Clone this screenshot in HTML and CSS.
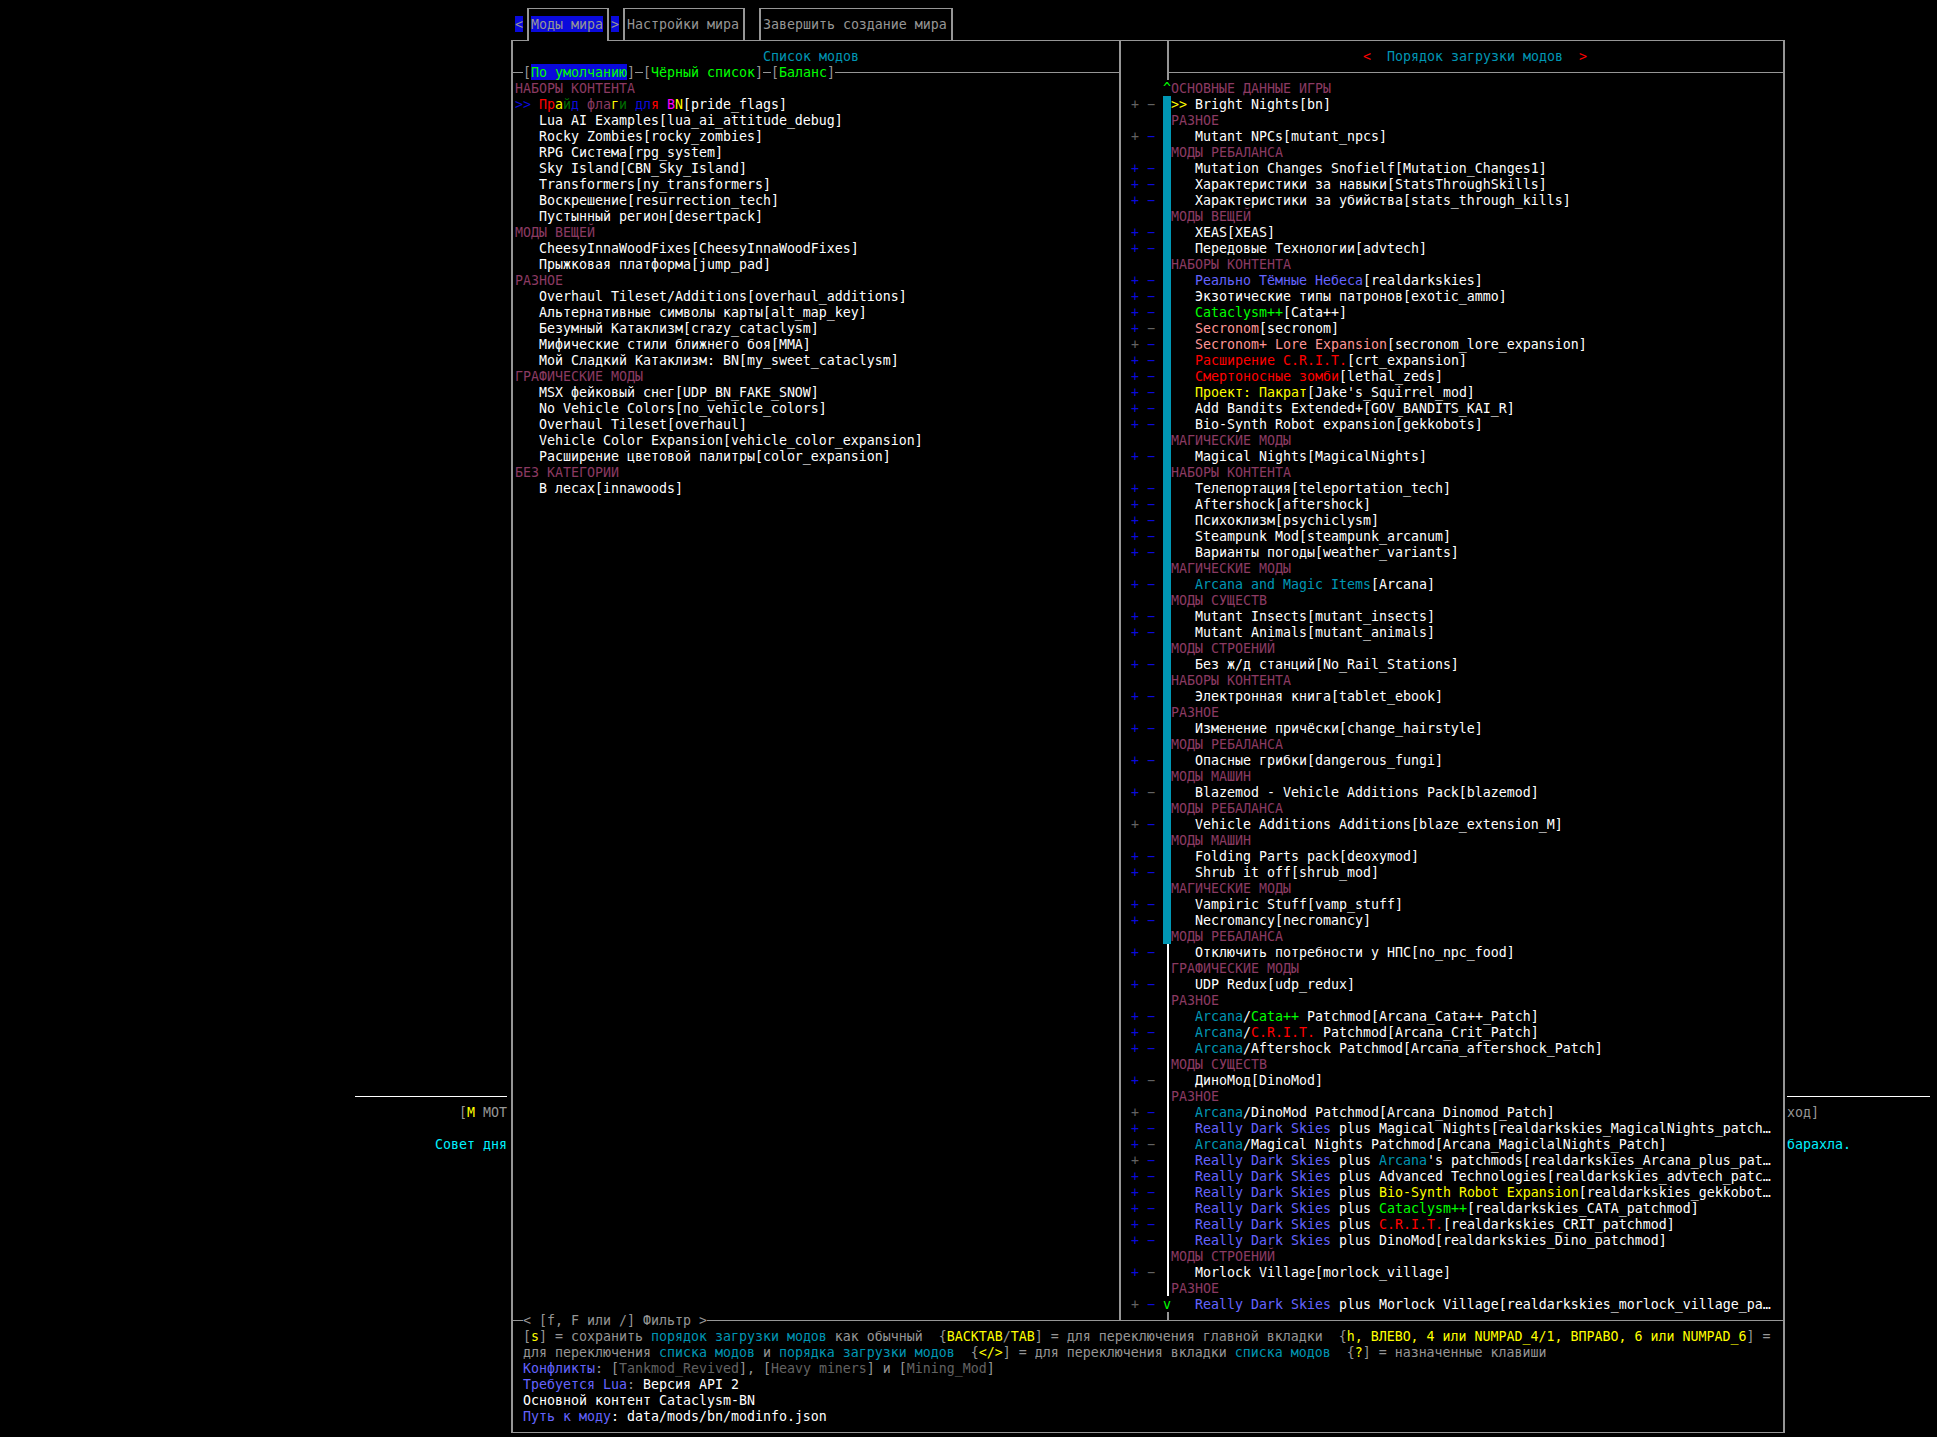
FILE: index.html
```html
<!DOCTYPE html>
<html lang="ru">
<head>
    <meta charset="UTF-8">
    <title>Моды мира</title>
    <link rel="stylesheet" href="styles.css">
</head>
<body>
<div class="screen">
    <div class="side side--left">
        <div class="side__rule"></div>
        <div class="row">[<span class="yellow">M</span> МОТ</div>
        <div class="row"></div>
        <div class="row lcyan">Совет дня</div>
    </div>

    <div class="window">
        <div class="tabs">
            <span class="tabs__arrow">&lt;</span>
            <div class="tab tab--active"><span class="hilite">Моды мира</span></div>
            <span class="tabs__arrow tabs__arrow--right">&gt;</span>
            <div class="tab">Настройки мира</div>
            <div class="tab tab--last">Завершить создание мира</div>
        </div>

        <div class="frame">
            <div class="panes">
                <section class="mods">
                    <div class="title title--mods cyan">Список модов</div>
                    <div class="rule-row">
                        <span class="dash dash--start"></span>
                        <span>[<span class="hilite lgreen">По умолчанию</span>]</span>
                        <span class="dash dash--gap"></span>
                        <span>[<span class="lgreen">Чёрный список</span>]</span>
                        <span class="dash dash--gap"></span>
                        <span>[<span class="lgreen">Баланс</span>]</span>
                        <span class="dash"></span>
                    </div>
                    <div class="list">
                        <div class="row cat">НАБОРЫ КОНТЕНТА</div>
                        <div class="row"><span class="blue">&gt;&gt; </span><span class="red">Пр</span><span class="yellow">а</span><span class="green">й</span><span class="blue">д</span> <span class="pink">фла</span><span class="yellow">г</span><span class="green">и</span> <span class="blue">дл</span><span class="red">я</span> <span class="magenta">B</span><span class="yellow">N</span>[pride_flags]</div>
                        <div class="row mod">Lua AI Examples[lua_ai_attitude_debug]</div>
                        <div class="row mod">Rocky Zombies[rocky_zombies]</div>
                        <div class="row mod">RPG Система[rpg_system]</div>
                        <div class="row mod">Sky Island[CBN_Sky_Island]</div>
                        <div class="row mod">Transformers[ny_transformers]</div>
                        <div class="row mod">Воскрешение[resurrection_tech]</div>
                        <div class="row mod">Пустынный регион[desertpack]</div>
                        <div class="row cat">МОДЫ ВЕЩЕЙ</div>
                        <div class="row mod">CheesyInnaWoodFixes[CheesyInnaWoodFixes]</div>
                        <div class="row mod">Прыжковая платформа[jump_pad]</div>
                        <div class="row cat">РАЗНОЕ</div>
                        <div class="row mod">Overhaul Tileset/Additions[overhaul_additions]</div>
                        <div class="row mod">Альтернативные символы карты[alt_map_key]</div>
                        <div class="row mod">Безумный Катаклизм[crazy_cataclysm]</div>
                        <div class="row mod">Мифические стили ближнего боя[MMA]</div>
                        <div class="row mod">Мой Сладкий Катаклизм: BN[my_sweet_cataclysm]</div>
                        <div class="row cat">ГРАФИЧЕСКИЕ МОДЫ</div>
                        <div class="row mod">MSX фейковый снег[UDP_BN_FAKE_SNOW]</div>
                        <div class="row mod">No Vehicle Colors[no_vehicle_colors]</div>
                        <div class="row mod">Overhaul Tileset[overhaul]</div>
                        <div class="row mod">Vehicle Color Expansion[vehicle_color_expansion]</div>
                        <div class="row mod">Расширение цветовой палитры[color_expansion]</div>
                        <div class="row cat">БЕЗ КАТЕГОРИИ</div>
                        <div class="row mod">В лесах[innawoods]</div>
                    </div>
                </section>

                <div class="flags">
                    <div class="row"></div>
                    <div class="row"><span class="off">+</span> <span class="off">−</span></div>
                    <div class="row"></div>
                    <div class="row"><span class="off">+</span> −</div>
                    <div class="row"></div>
                    <div class="row">+ −</div>
                    <div class="row">+ −</div>
                    <div class="row">+ −</div>
                    <div class="row"></div>
                    <div class="row">+ −</div>
                    <div class="row">+ −</div>
                    <div class="row"></div>
                    <div class="row">+ −</div>
                    <div class="row">+ −</div>
                    <div class="row">+ −</div>
                    <div class="row">+ <span class="off">−</span></div>
                    <div class="row"><span class="off">+</span> −</div>
                    <div class="row">+ −</div>
                    <div class="row">+ −</div>
                    <div class="row">+ −</div>
                    <div class="row">+ −</div>
                    <div class="row">+ −</div>
                    <div class="row"></div>
                    <div class="row">+ −</div>
                    <div class="row"></div>
                    <div class="row">+ −</div>
                    <div class="row">+ −</div>
                    <div class="row">+ −</div>
                    <div class="row">+ −</div>
                    <div class="row">+ −</div>
                    <div class="row"></div>
                    <div class="row">+ −</div>
                    <div class="row"></div>
                    <div class="row">+ −</div>
                    <div class="row">+ −</div>
                    <div class="row"></div>
                    <div class="row">+ −</div>
                    <div class="row"></div>
                    <div class="row">+ −</div>
                    <div class="row"></div>
                    <div class="row">+ −</div>
                    <div class="row"></div>
                    <div class="row">+ −</div>
                    <div class="row"></div>
                    <div class="row">+ <span class="off">−</span></div>
                    <div class="row"></div>
                    <div class="row"><span class="off">+</span> −</div>
                    <div class="row"></div>
                    <div class="row">+ −</div>
                    <div class="row">+ −</div>
                    <div class="row"></div>
                    <div class="row">+ −</div>
                    <div class="row">+ −</div>
                    <div class="row"></div>
                    <div class="row">+ −</div>
                    <div class="row"></div>
                    <div class="row">+ −</div>
                    <div class="row"></div>
                    <div class="row">+ −</div>
                    <div class="row">+ −</div>
                    <div class="row">+ −</div>
                    <div class="row"></div>
                    <div class="row">+ <span class="off">−</span></div>
                    <div class="row"></div>
                    <div class="row"><span class="off">+</span> −</div>
                    <div class="row">+ −</div>
                    <div class="row">+ <span class="off">−</span></div>
                    <div class="row"><span class="off">+</span> −</div>
                    <div class="row">+ −</div>
                    <div class="row">+ −</div>
                    <div class="row">+ −</div>
                    <div class="row">+ −</div>
                    <div class="row">+ −</div>
                    <div class="row"></div>
                    <div class="row">+ <span class="off">−</span></div>
                    <div class="row"></div>
                    <div class="row"><span class="off">+</span> −</div>
                </div>

                <div class="scroll">
                    <div class="scroll__stub scroll__stub--top"></div>
                    <div class="row lgreen">^</div>
                    <div class="scroll__thumb"></div>
                    <div class="scroll__track"></div>
                    <div class="row lgreen">v</div>
                    <div class="scroll__stub"></div>
                </div>

                <section class="order">
                    <div class="title title--order"><span class="red">&lt;</span>  <span class="cyan">Порядок загрузки модов</span>  <span class="red">&gt;</span></div>
                    <div class="rule-row rule-row--order"><span class="dash"></span></div>
                    <div class="list">
                        <div class="row cat">ОСНОВНЫЕ ДАННЫЕ ИГРЫ</div>
                        <div class="row"><span class="yellow">&gt;&gt; </span>Bright Nights[bn]</div>
                        <div class="row cat">РАЗНОЕ</div>
                        <div class="row mod">Mutant NPCs[mutant_npcs]</div>
                        <div class="row cat">МОДЫ РЕБАЛАНСА</div>
                        <div class="row mod">Mutation Changes Snofielf[Mutation_Changes1]</div>
                        <div class="row mod">Характеристики за навыки[StatsThroughSkills]</div>
                        <div class="row mod">Характеристики за убийства[stats_through_kills]</div>
                        <div class="row cat">МОДЫ ВЕЩЕЙ</div>
                        <div class="row mod">XEAS[XEAS]</div>
                        <div class="row mod">Передовые Технологии[advtech]</div>
                        <div class="row cat">НАБОРЫ КОНТЕНТА</div>
                        <div class="row mod"><span class="lblue">Реально Тёмные Небеса</span>[realdarkskies]</div>
                        <div class="row mod">Экзотические типы патронов[exotic_ammo]</div>
                        <div class="row mod"><span class="lgreen">Cataclysm++</span>[Cata++]</div>
                        <div class="row mod"><span class="lred">Secronom</span>[secronom]</div>
                        <div class="row mod"><span class="lred">Secronom+ Lore Expansion</span>[secronom_lore_expansion]</div>
                        <div class="row mod"><span class="red">Расширение C.R.I.T.</span>[crt_expansion]</div>
                        <div class="row mod"><span class="red">Смертоносные зомби</span>[lethal_zeds]</div>
                        <div class="row mod"><span class="yellow">Проект: Пакрат</span>[Jake's_Squirrel_mod]</div>
                        <div class="row mod">Add Bandits Extended+[GOV_BANDITS_KAI_R]</div>
                        <div class="row mod">Bio-Synth Robot expansion[gekkobots]</div>
                        <div class="row cat">МАГИЧЕСКИЕ МОДЫ</div>
                        <div class="row mod">Magical Nights[MagicalNights]</div>
                        <div class="row cat">НАБОРЫ КОНТЕНТА</div>
                        <div class="row mod">Телепортация[teleportation_tech]</div>
                        <div class="row mod">Aftershock[aftershock]</div>
                        <div class="row mod">Психоклизм[psychiclysm]</div>
                        <div class="row mod">Steampunk Mod[steampunk_arcanum]</div>
                        <div class="row mod">Варианты погоды[weather_variants]</div>
                        <div class="row cat">МАГИЧЕСКИЕ МОДЫ</div>
                        <div class="row mod"><span class="cyan">Arcana and Magic Items</span>[Arcana]</div>
                        <div class="row cat">МОДЫ СУЩЕСТВ</div>
                        <div class="row mod">Mutant Insects[mutant_insects]</div>
                        <div class="row mod">Mutant Animals[mutant_animals]</div>
                        <div class="row cat">МОДЫ СТРОЕНИЙ</div>
                        <div class="row mod">Без ж/д станций[No_Rail_Stations]</div>
                        <div class="row cat">НАБОРЫ КОНТЕНТА</div>
                        <div class="row mod">Электронная книга[tablet_ebook]</div>
                        <div class="row cat">РАЗНОЕ</div>
                        <div class="row mod">Изменение причёски[change_hairstyle]</div>
                        <div class="row cat">МОДЫ РЕБАЛАНСА</div>
                        <div class="row mod">Опасные грибки[dangerous_fungi]</div>
                        <div class="row cat">МОДЫ МАШИН</div>
                        <div class="row mod">Blazemod - Vehicle Additions Pack[blazemod]</div>
                        <div class="row cat">МОДЫ РЕБАЛАНСА</div>
                        <div class="row mod">Vehicle Additions Additions[blaze_extension_M]</div>
                        <div class="row cat">МОДЫ МАШИН</div>
                        <div class="row mod">Folding Parts pack[deoxymod]</div>
                        <div class="row mod">Shrub it off[shrub_mod]</div>
                        <div class="row cat">МАГИЧЕСКИЕ МОДЫ</div>
                        <div class="row mod">Vampiric Stuff[vamp_stuff]</div>
                        <div class="row mod">Necromancy[necromancy]</div>
                        <div class="row cat">МОДЫ РЕБАЛАНСА</div>
                        <div class="row mod">Отключить потребности у НПС[no_npc_food]</div>
                        <div class="row cat">ГРАФИЧЕСКИЕ МОДЫ</div>
                        <div class="row mod">UDP Redux[udp_redux]</div>
                        <div class="row cat">РАЗНОЕ</div>
                        <div class="row mod"><span class="cyan">Arcana</span>/<span class="lgreen">Cata++</span> Patchmod[Arcana_Cata++_Patch]</div>
                        <div class="row mod"><span class="cyan">Arcana</span>/<span class="red">C.R.I.T.</span> Patchmod[Arcana_Crit_Patch]</div>
                        <div class="row mod"><span class="cyan">Arcana</span>/Aftershock Patchmod[Arcana_aftershock_Patch]</div>
                        <div class="row cat">МОДЫ СУЩЕСТВ</div>
                        <div class="row mod">ДиноМод[DinoMod]</div>
                        <div class="row cat">РАЗНОЕ</div>
                        <div class="row mod"><span class="cyan">Arcana</span>/DinoMod Patchmod[Arcana_Dinomod_Patch]</div>
                        <div class="row mod"><span class="lblue">Really Dark Skies</span> plus Magical Nights[realdarkskies_MagicalNights_patch…</div>
                        <div class="row mod"><span class="cyan">Arcana</span>/Magical Nights Patchmod[Arcana_MagiclalNights_Patch]</div>
                        <div class="row mod"><span class="lblue">Really Dark Skies</span> plus <span class="cyan">Arcana</span>'s patchmods[realdarkskies_Arcana_plus_pat…</div>
                        <div class="row mod"><span class="lblue">Really Dark Skies</span> plus Advanced Technologies[realdarkskies_advtech_patc…</div>
                        <div class="row mod"><span class="lblue">Really Dark Skies</span> plus <span class="yellow">Bio-Synth Robot Expansion</span>[realdarkskies_gekkobot…</div>
                        <div class="row mod"><span class="lblue">Really Dark Skies</span> plus <span class="lgreen">Cataclysm++</span>[realdarkskies_CATA_patchmod]</div>
                        <div class="row mod"><span class="lblue">Really Dark Skies</span> plus <span class="red">C.R.I.T.</span>[realdarkskies_CRIT_patchmod]</div>
                        <div class="row mod"><span class="lblue">Really Dark Skies</span> plus DinoMod[realdarkskies_Dino_patchmod]</div>
                        <div class="row cat">МОДЫ СТРОЕНИЙ</div>
                        <div class="row mod">Morlock Village[morlock_village]</div>
                        <div class="row cat">РАЗНОЕ</div>
                        <div class="row mod"><span class="lblue">Really Dark Skies</span> plus Morlock Village[realdarkskies_morlock_village_pa…</div>
                    </div>
                </section>
            </div>

            <div class="rule-row rule-row--filter">
                <span class="dash dash--start"></span>
                <span>&lt; [f, F или /] Фильтр &gt;</span>
                <span class="dash"></span>
            </div>

            <div class="info">
                <div class="row gray">[<span class="yellow">s</span>] = сохранить <span class="cyan">порядок загрузки модов</span> как обычный  {<span class="yellow">BACKTAB</span>/<span class="yellow">TAB</span>] = для переключения главной вкладки  {<span class="yellow">h, ВЛЕВО, 4 или NUMPAD_4/1, ВПРАВО, 6 или NUMPAD_6</span>] =</div>
                <div class="row gray">для переключения <span class="cyan">списка модов</span> и <span class="cyan">порядка загрузки модов</span>  {<span class="yellow">&lt;/&gt;</span>] = для переключения вкладки <span class="cyan">списка модов</span>  {<span class="yellow">?</span>] = назначенные клавиши</div>
                <div class="row gray"><span class="lblue">Конфликты</span>: [<span class="dgray">Tankmod_Revived</span>], [<span class="dgray">Heavy miners</span>] и [<span class="dgray">Mining_Mod</span>]</div>
                <div class="row gray"><span class="lblue">Требуется Lua</span>: <span class="white">Версия API 2</span></div>
                <div class="row white">Основной контент Cataclysm-BN</div>
                <div class="row white"><span class="lblue">Путь к моду</span>: data/mods/bn/modinfo.json</div>
            </div>
        </div>
    </div>

    <div class="side side--right">
        <div class="side__rule"></div>
        <div class="row">ход]</div>
        <div class="row"></div>
        <div class="row lcyan">барахла.</div>
    </div>
</div>
</body>
</html>
```

FILE: styles.css
```css
html, body {
    margin: 0;
    height: 100%;
    background: #000;
    overflow: hidden;
}
body {
    padding-left: 3px;
    color: #969696;
    font-family: "DejaVu Sans Mono", "Liberation Mono", monospace;
    font-size: 13.29px;
    line-height: 18px; /* rows stay 16px, this drops the glyphs 1px in the cell */
}
.screen {
    display: flex;
    align-items: flex-start;
}
.row,
.title {
    height: 16px;
    white-space: pre;
}

/* colours */
.white { color: #fff; }
.gray { color: #969696; }
.dgray { color: #636363; }
.cyan { color: #0096b4; }
.lcyan { color: #00f0ff; }
.blue { color: #0a0adc; }
.lblue { color: #6464ff; }
.green { color: #006e00; }
.lgreen { color: #00ff00; }
.red { color: #ff0000; }
.lred { color: #ff9696; }
.yellow { color: #ffff00; }
.magenta { color: #fe00fe; }
.pink { color: #8b3a62; }
.hilite {
    display: inline-block;
    height: 16px;
    background: #0a0adc;
}

/* the screen behind the window */
.side {
    padding-top: 1096px;
}
.side--left {
    width: 504px;
    text-align: right;
}
.side--right {
    width: 143px;
}
.side__rule {
    height: 1px;
    margin-bottom: 7px;
    background: #fff;
}
.side--left .side__rule {
    margin-left: 352px;
}

.window {
    width: 1280px;
    flex: none;
}

.tabs {
    display: flex;
    align-items: flex-start;
    height: 32px;
    padding: 8px 0 0 8px;
}
.tabs__arrow {
    height: 16px;
    margin: 8px 4px 0 0;
    background: #0a0adc;
}
.tabs__arrow--right {
    margin-left: 2px;
}
.tab {
    height: 24px;
    padding: 7px 4px 0 2px;
    border: 2px solid #969696;
    border-width: 1px 2px 0;
}
.tab--active {
    position: relative;
    z-index: 1;
    height: 25px;
    background: #000;
}
.tab--last {
    margin-left: 14px;
}

.frame {
    width: 1270px;
    margin-left: 4px;
    border: 2px solid #969696;
    border-width: 1px 2px;
}
.panes {
    display: flex;
    height: 1279px;
}
.title {
    padding-top: 7px;
}
.title--mods {
    padding-left: 250px;
}
.title--order {
    padding-left: 192px;
}

.rule-row {
    display: flex;
    height: 16px;
}
.rule-row--order {
    margin-left: -2px;
}
.rule-row--filter {
    margin-top: -8px;
}
.dash {
    flex: 1;
    height: 1px;
    margin-top: 8px;
    background: #969696;
}
.dash--start {
    flex: none;
    width: 10px;
}
.dash--gap {
    flex: none;
    width: 8px;
}

.mods {
    width: 606px;
    border-right: 2px solid #969696;
}
.order {
    width: 612px;
}
.list {
    color: #fff;
    padding-left: 2px;
}
.order .list {
    padding-left: 0;
}
.cat {
    color: #8b3a62;
}
.mod {
    padding-left: 24px;
}

.flags {
    width: 32px;
    padding: 39px 0 0 10px;
    color: #0a0adc;
}
.off {
    color: #636363;
}

.scroll {
    width: 8px;
}
.scroll__stub {
    width: 2px;
    height: 8px;
    margin-left: 4px;
    background: #969696;
}
.scroll__stub--top {
    height: 39px;
}
.scroll__thumb {
    height: 848px;
    background: #0096b4;
}
.scroll__track {
    width: 2px;
    height: 352px;
    margin-left: 4px;
    background: #fff;
}

.info {
    padding: 0 0 8px 10px;
}
```
